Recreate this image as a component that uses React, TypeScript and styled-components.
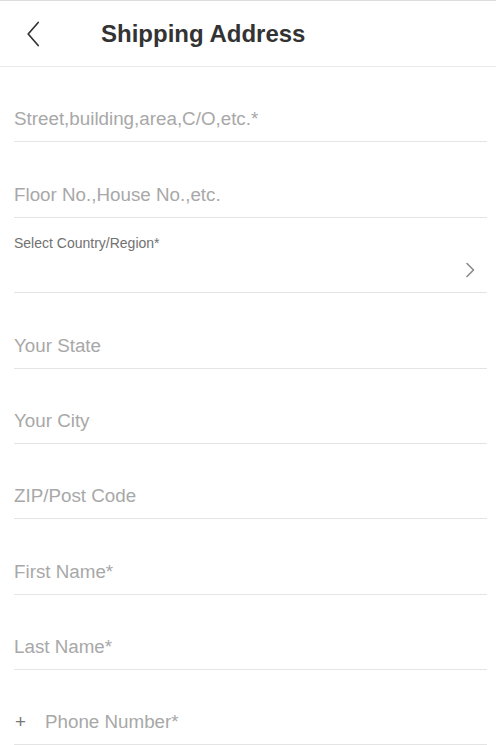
import React from "react";
import styled, { createGlobalStyle } from "styled-components";

const GlobalStyle = createGlobalStyle`
  html, body {
    margin: 0;
    padding: 0;
    background: #fff;
  }
  body {
    font-family: "Liberation Sans", Arial, sans-serif;
  }
  * { box-sizing: border-box; }
`;

const Page = styled.div`
  width: 496px;
  background: #fff;
`;

const Header = styled.header`
  height: 67px;
  display: flex;
  align-items: center;
  border-top: 1px solid #dcdcdc;
  border-bottom: 1px solid #ececec;
  padding-left: 27px;
`;

const BackButton = styled.button`
  display: flex;
  align-items: center;
  justify-content: center;
  width: 12px;
  height: 26px;
  padding: 0;
  border: none;
  background: none;
  margin-right: 62px;
  cursor: pointer;
`;

const Title = styled.h1`
  margin: 0;
  font-size: 24px;
  font-weight: 700;
  color: #333;
  letter-spacing: 0;
`;

const Form = styled.form`
  display: flex;
  flex-direction: column;
  padding: 0 9px 0 14px;
`;

const Field = styled.label`
  height: 75.375px;
  display: flex;
  align-items: flex-end;
  border-bottom: 1px solid #e4e4e4;
  padding-bottom: 11px;
`;

const Input = styled.input`
  flex: 1;
  min-width: 0;
  height: 22px;
  line-height: 22px;
  border: none;
  outline: none;
  padding: 0;
  margin: 0;
  background: transparent;
  font-family: "Liberation Sans", Arial, sans-serif;
  font-size: 18.8px;
  color: #333;
  &::placeholder {
    color: #a8a8a8;
  }
`;

const Prefix = styled.span`
  width: 31px;
  padding-left: 1px;
  height: 22px;
  line-height: 22px;
  font-size: 18.8px;
  color: #777;
`;

const SelectField = styled.div`
  height: 75.375px;
  display: flex;
  flex-direction: column;
  border-bottom: 1px solid #e4e4e4;
  padding-top: 17px;
  cursor: pointer;
`;

const SelectLabel = styled.span`
  font-size: 14px;
  line-height: 16px;
  color: #717171;
`;

const SelectRow = styled.div`
  display: flex;
  justify-content: flex-end;
  padding-top: 11px;
  padding-right: 12px;
`;

const fields = [
  "Street,building,area,C/O,etc.*",
  "Floor No.,House No.,etc.",
];

const fields2 = [
  "Your State",
  "Your City",
  "ZIP/Post Code",
  "First Name*",
  "Last Name*",
];

export default function App() {
  return (
    <Page>
      <GlobalStyle />
      <Header>
        <BackButton type="button" aria-label="Back">
          <svg width="12" height="26" viewBox="0 0 12 26" fill="none">
            <polyline
              points="11.2,1.5 1.2,13 11.2,24.5"
              stroke="#333"
              strokeWidth="1.7"
              strokeLinecap="round"
              strokeLinejoin="round"
            />
          </svg>
        </BackButton>
        <Title>Shipping Address</Title>
      </Header>
      <Form onSubmit={(e) => e.preventDefault()}>
        {fields.map((p) => (
          <Field key={p}>
            <Input placeholder={p} />
          </Field>
        ))}
        <SelectField>
          <SelectLabel>Select Country/Region*</SelectLabel>
          <SelectRow>
            <svg width="10" height="16" viewBox="0 0 10 16" fill="none">
              <polyline
                points="2,1.5 8.5,8 2,14.5"
                stroke="#8a8a8a"
                strokeWidth="1.6"
                strokeLinecap="round"
                strokeLinejoin="round"
              />
            </svg>
          </SelectRow>
        </SelectField>
        {fields2.map((p) => (
          <Field key={p}>
            <Input placeholder={p} />
          </Field>
        ))}
        <Field>
          <Prefix>+</Prefix>
          <Input placeholder="Phone Number*" />
        </Field>
      </Form>
    </Page>
  );
}
